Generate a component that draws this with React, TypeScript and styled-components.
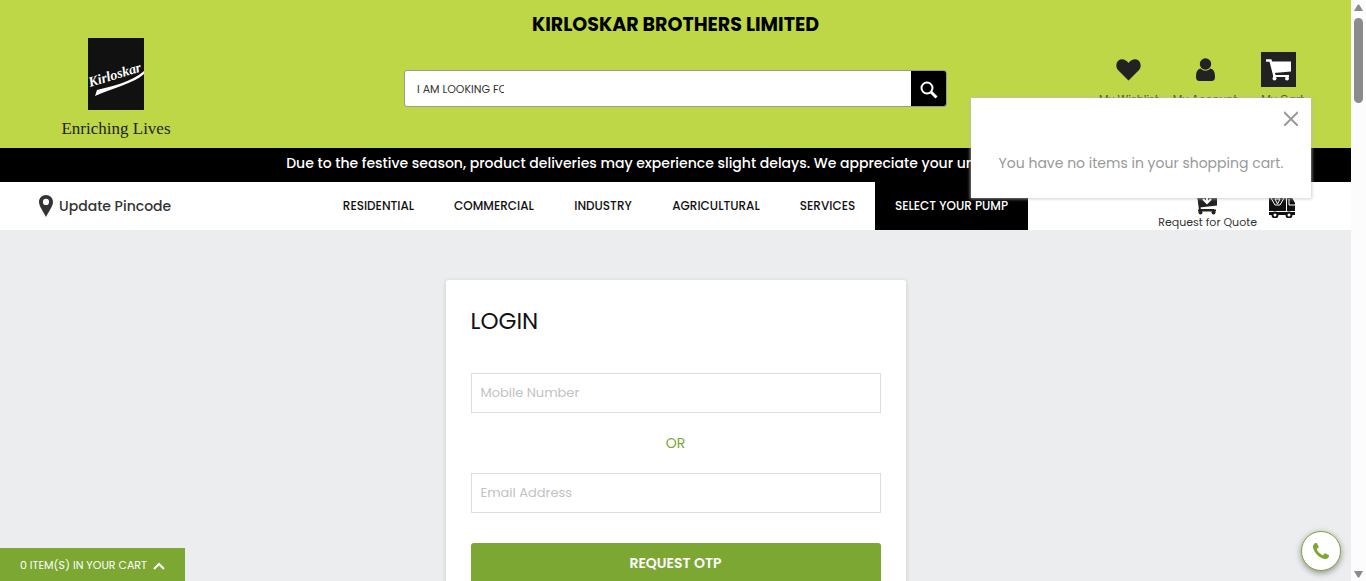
import React from "react";
import styled, { createGlobalStyle } from "styled-components";

const GlobalStyle = createGlobalStyle`
  *, *::before, *::after { box-sizing: border-box; }
  body {
    margin: 0;
    background: #ebedef;
    color: #333;
    font-family: Poppins, Inter, "Open Sans", sans-serif;
    font-size: 14px;
  }
  button, input { font: inherit; }
  a { color: inherit; text-decoration: none; }
`;

const Window = styled.div`
  display: flex;
  height: 100vh;
  overflow: hidden;
`;

const Page = styled.div`
  position: relative;
  flex: 1;
  min-width: 0;
  overflow: hidden;
`;

const ScrollBar = styled.div`
  display: flex;
  flex-direction: column;
  align-items: center;
  width: 15px;
  padding: 4px 0 3px;
  background: #fcfcfc;
`;

const ScrollThumb = styled.div`
  width: 9px;
  height: 85px;
  margin: 6px 0 auto;
  border-radius: 5px;
  background: #8b8b8b;
`;

const Header = styled.header`
  display: grid;
  grid-template-columns: 1fr minmax(0, 543px) 1fr;
  min-height: 148px;
  background: #bdd746;
`;

const Brand = styled.a`
  display: flex;
  flex-direction: column;
  align-items: center;
  width: 112px;
  margin: 38px 0 0 60px;
  color: #222;
  font-family: "Liberation Serif", serif;
  font-size: 17px;
  line-height: 20px;
  white-space: nowrap;
  gap: 9px;
`;

const HeaderCenter = styled.div`
  display: flex;
  flex-direction: column;
  gap: 20px;
`;

const CompanyName = styled.h1`
  margin: 0;
  color: #000;
  font-size: 19px;
  line-height: 50px;
  font-weight: 700;
  text-align: center;
  white-space: nowrap;
`;

const SearchForm = styled.form`
  display: flex;
  justify-content: space-between;
  height: 37px;
  border: 1px solid #999;
  border-radius: 3px;
  background: #fff;
  overflow: hidden;
`;

const SearchInput = styled.input`
  width: 99px;
  padding: 2px 0 0 12px;
  border: 0;
  outline: 0;
  background: transparent;
  font-size: 11px;
  &::placeholder { color: #333; opacity: 1; }
`;

const SearchButton = styled.button`
  display: flex;
  align-items: center;
  justify-content: center;
  width: 35px;
  padding: 2px 0 0;
  border: 0;
  background: #000;
`;

const Shortcuts = styled.nav`
  display: flex;
  justify-content: flex-end;
  align-items: flex-start;
  gap: 14px;
  padding: 52px 47px 0 0;
`;

const Shortcut = styled.a<{ $start?: boolean }>`
  display: flex;
  flex-direction: column;
  align-items: ${(p) => (p.$start ? "flex-start" : "center")};
  margin-left: ${(p) => (p.$start ? "10px" : "0")};
  gap: 3px;
  font-size: 11px;
  line-height: 18px;
  white-space: nowrap;
`;

const ShortcutIcon = styled.span<{ $boxed?: boolean }>`
  display: flex;
  align-items: center;
  justify-content: center;
  width: 35px;
  height: 35px;
  background: ${(p) => (p.$boxed ? "#222" : "transparent")};
`;

const Notice = styled.p`
  margin: 0;
  padding: 0 20px;
  background: #000;
  color: #fff;
  font-size: 14px;
  line-height: 30px;
  height: 34px;
  font-weight: 500;
  text-align: center;
  white-space: nowrap;
`;

const NavBar = styled.div`
  display: grid;
  grid-template-columns: 323px minmax(0, 705px) 1fr;
  height: 48px;
  background: #fff;
`;

const Pincode = styled.a`
  display: flex;
  align-items: center;
  gap: 6px;
  padding-left: 39px;
  font-size: 14px;
  font-weight: 500;
`;

const Categories = styled.nav`
  display: grid;
  grid-template-columns: 111fr 120fr 98fr 128fr 95fr 153fr;
`;

const Category = styled.a<{ $active?: boolean }>`
  display: flex;
  align-items: center;
  justify-content: center;
  background: ${(p) => (p.$active ? "#000" : "transparent")};
  color: ${(p) => (p.$active ? "#fff" : "#111")};
  font-size: 12px;
  font-weight: 500;
  white-space: nowrap;
`;

const QuickActions = styled.div`
  display: flex;
  justify-content: flex-end;
  align-items: flex-start;
  gap: 12px;
  padding: 11px 56px 0 0;
`;

const QuickAction = styled.a`
  display: flex;
  flex-direction: column;
  align-items: center;
  font-size: 11px;
  line-height: 14px;
  white-space: nowrap;
`;

const CartPopup = styled.section`
  position: absolute;
  top: 98px;
  right: 40px;
  display: flex;
  flex-direction: column;
  width: 340px;
  height: 100px;
  padding: 13px;
  background: #fff;
  box-shadow: 0 0 3px 1px rgba(190, 190, 190, 0.7);
`;

const CloseButton = styled.button`
  display: flex;
  align-self: flex-end;
  padding: 0;
  border: 0;
  background: transparent;
`;

const EmptyMessage = styled.p`
  margin: 26px 0 0;
  color: #999;
  font-size: 14px;
  line-height: 22px;
  text-align: center;
  white-space: nowrap;
`;

const Main = styled.main`
  display: flex;
  justify-content: center;
  padding: 50px 20px;
`;

const LoginCard = styled.form`
  display: flex;
  flex-direction: column;
  width: 100%;
  max-width: 460px;
  padding: 25px 25px 40px;
  border-radius: 3px;
  background: #fff;
  box-shadow: 0 1px 5px rgba(0, 0, 0, 0.15);
`;

const LoginTitle = styled.h2`
  margin: 0 0 36px;
  color: #111;
  font-size: 23px;
  line-height: 32px;
  font-weight: 400;
`;

const Field = styled.input`
  width: 100%;
  height: 40px;
  padding: 0 9px;
  border: 1px solid #ddd;
  background: #fff;
  font-size: 13px;
  &::placeholder { color: #c2c2c2; opacity: 1; }
`;

const Divider = styled.p`
  margin: 0;
  color: #7da733;
  font-size: 14px;
  line-height: 60px;
  text-align: center;
`;

const SubmitButton = styled.button`
  height: 40px;
  margin-top: 30px;
  border: 0;
  border-radius: 3px;
  background: #7da733;
  color: #fff;
  font-size: 14px;
  font-weight: 600;
`;

const CartTab = styled.button`
  position: fixed;
  left: 0;
  bottom: 0;
  display: flex;
  align-items: center;
  justify-content: center;
  gap: 6px;
  width: 185px;
  height: 33px;
  padding: 2px 0 0;
  border: 0;
  background: #7da733;
  color: #fff;
  font-size: 11px;
  font-weight: 400;
`;

const CallButton = styled.a`
  position: fixed;
  right: 25px;
  bottom: 10px;
  display: flex;
  align-items: center;
  justify-content: center;
  width: 40px;
  height: 40px;
  border: 1px solid #7da733;
  border-radius: 50%;
  background: #fff;
  box-shadow: 0 2px 6px rgba(0, 0, 0, 0.4);
`;

const Logo = () => (
  <svg width="56" height="72" viewBox="0 0 56 72" aria-hidden="true">
    <rect width="56" height="72" fill="#111" />
    <text
      x="2"
      y="49"
      transform="rotate(-17 2 49)"
      fill="#fff"
      fontFamily="'Liberation Serif', serif"
      fontSize="14"
      fontStyle="italic"
      fontWeight="700"
    >
      Kirloskar
    </text>
    <path d="M9 52C24 48 44 44 56 33L56 36C46 45 28 49 7 58Z" fill="#fff" />
  </svg>
);

const HeartIcon = () => (
  <svg width="25" height="22" viewBox="0 0 25 22" fill="#222" aria-hidden="true">
    <path d="M12.500 21.500L2 11C-.5 8 0 3.500 2.500 1.500C5.500-.6 9.500.2 12.500 4C15.500.2 19.500-.6 22.500 1.500C25 3.500 25.500 8 23 11Z" />
  </svg>
);

const UserIcon = () => (
  <svg width="19" height="23" viewBox="0 0 19 23" fill="#222" aria-hidden="true">
    <circle cx="9.500" cy="6" r="5.700" />
    <path d="M4.500 10.500Q9.500 15 14.500 10.500C18 11.500 19 14.500 19 19Q19 23 15.500 23H3.500Q0 23 0 19C0 14.500 1 11.500 4.500 10.500Z" />
  </svg>
);

const CartIcon = () => (
  <svg width="25" height="22" viewBox="0 0 25 22" aria-hidden="true">
    <path d="M0 1.500H4.500L8.500 17" fill="none" stroke="#fff" strokeWidth="2.500" />
    <path d="M5 2.500H25V12.500L8 14Z" fill="#fff" />
    <path d="M7 17H23" stroke="#fff" strokeWidth="2" />
    <circle cx="8.500" cy="19.500" r="2" fill="#fff" />
    <circle cx="21" cy="19.500" r="2" fill="#fff" />
  </svg>
);

const SearchIcon = () => (
  <svg width="18" height="18" viewBox="0 0 18 18" fill="none" stroke="#fff" aria-hidden="true">
    <circle cx="7" cy="7" r="5.500" strokeWidth="2" />
    <path d="M11 11L16.500 16.500" strokeWidth="3" />
  </svg>
);

const PinIcon = () => (
  <svg width="14" height="22" viewBox="0 0 14 22" aria-hidden="true">
    <path
      d="M7 0C3 0 0 3 0 7C0 11 4 16 7 22C10 16 14 11 14 7C14 3 11 0 7 0ZM7 3.800A3.100 3.100 0 1 1 7 10A3.100 3.100 0 0 1 7 3.800Z"
      fill="#333"
      fillRule="evenodd"
    />
  </svg>
);

const QuoteIcon = () => (
  <svg width="26" height="22" viewBox="0 0 26 22" aria-hidden="true">
    <path d="M1 1H3L5 17H19" fill="none" stroke="#222" strokeWidth="2" />
    <path d="M2 3H22V12.500L4.500 14.500Z" fill="#222" />
    <path d="M12 2V10M8 6L12 10L16 6" fill="none" stroke="#fff" strokeWidth="2" />
    <path d="M3 17.500H21" stroke="#222" strokeWidth="2" />
    <circle cx="5.500" cy="19.500" r="2" fill="#222" />
    <circle cx="18.500" cy="19.500" r="2" fill="#222" />
  </svg>
);

const TruckIcon = () => (
  <svg width="26" height="25" viewBox="0 0 26 25" aria-hidden="true">
    <path d="M0 1H17V18H0ZM18 3H22L26 10V18H18ZM0 19H26V22H0Z" fill="#111" />
    <path d="M2 5L6 12H11L15 5M8.500 11L6 6H11ZM20 6V12H26" fill="none" stroke="#fff" strokeWidth="1" />
    <circle cx="6" cy="22" r="2.500" fill="#fff" stroke="#111" strokeWidth="2" />
    <circle cx="20" cy="22" r="2.500" fill="#fff" stroke="#111" strokeWidth="2" />
  </svg>
);

const CloseIcon = () => (
  <svg width="14" height="15" viewBox="0 0 14 15" stroke="#999" strokeWidth="2" aria-hidden="true">
    <path d="M0 1L14 15M14 1L0 15" />
  </svg>
);

const ChevronUpIcon = () => (
  <svg width="12" height="8" viewBox="0 0 12 8" fill="none" stroke="#fff" strokeWidth="2" aria-hidden="true">
    <path d="M1 7L6 2L11 7" />
  </svg>
);

const PhoneIcon = () => (
  <svg width="16" height="16" viewBox="0 0 1408 1408" fill="#7da733" aria-hidden="true">
    <path d="M1408 1112q0 27-10 70.500t-20.500 68.500q-21 50-122 106-94 51-186 51-27 0-52.500-3.500t-57.500-12.500-47.500-14.500-55.500-20.500-49-18q-98-35-175-83-128-79-264.500-215.500t-215.500-264.500q-48-77-83-175-3-9-18-49t-20.500-55.500-14.500-47.500-12.500-57.500-3.500-52.500q0-92 51-186 56-101 106-122 25-11 68.500-21t70.500-10q14 0 21 3 18 6 53 76 11 19 30 54t35 63.500 31 53.500q3 4 17.500 25t21.500 35.500 7 28.500q0 20-28.500 50t-62 55-62 53-28.500 46q0 9 5 22.500t8.500 20.500 14 24 11.500 19q76 137 174 235t235 174q2 1 19 11.500t24 14 20.500 8.500 22.500 5q18 0 46-28.500t53-62 55-62 50-28.500q14 0 28.500 7t35.500 21.500 25 17.500q25 15 53.500 31t63.500 35 54 30q70 35 76 53 3 7 3 21z" />
  </svg>
);

const Arrow = ({ down = false }: { down?: boolean }) => (
  <svg width="9" height="8" viewBox="0 0 9 8" fill="#8b8b8b" aria-hidden="true">
    <path d={down ? "M0 1H9L5.500 7Q4.500 8 3.500 7Z" : "M0 7H9L5.500 1Q4.500 0 3.500 1Z"} />
  </svg>
);

const categories = ["RESIDENTIAL", "COMMERCIAL", "INDUSTRY", "AGRICULTURAL", "SERVICES", "SELECT YOUR PUMP"];

export default function App() {
  return (
    <Window>
      <GlobalStyle />
      <Page>
        <Header>
          <Brand href="#">
            <Logo />
            Enriching Lives
          </Brand>
          <HeaderCenter>
            <CompanyName>KIRLOSKAR BROTHERS LIMITED</CompanyName>
            <SearchForm role="search">
              <SearchInput type="text" aria-label="Search" placeholder="I AM LOOKING FOR" />
              <SearchButton type="button" aria-label="Search">
                <SearchIcon />
              </SearchButton>
            </SearchForm>
          </HeaderCenter>
          <Shortcuts>
            <Shortcut href="#">
              <ShortcutIcon><HeartIcon /></ShortcutIcon>
              My Wishlist
            </Shortcut>
            <Shortcut href="#">
              <ShortcutIcon><UserIcon /></ShortcutIcon>
              My Account
            </Shortcut>
            <Shortcut href="#" $start>
              <ShortcutIcon $boxed><CartIcon /></ShortcutIcon>
              My Cart
            </Shortcut>
          </Shortcuts>
        </Header>
        <Notice>
          Due to the festive season, product deliveries may experience slight delays. We appreciate your understanding.
        </Notice>
        <NavBar>
          <Pincode href="#">
            <PinIcon />
            Update Pincode
          </Pincode>
          <Categories>
            {categories.map((name) => (
              <Category key={name} href="#" $active={name === "SELECT YOUR PUMP"}>
                {name}
              </Category>
            ))}
          </Categories>
          <QuickActions>
            <QuickAction href="#">
              <QuoteIcon />
              Request for Quote
            </QuickAction>
            <QuickAction href="#" aria-label="Track order">
              <TruckIcon />
            </QuickAction>
          </QuickActions>
        </NavBar>
        <Main>
          <LoginCard>
            <LoginTitle>LOGIN</LoginTitle>
            <Field type="tel" aria-label="Mobile Number" placeholder="Mobile Number" />
            <Divider>OR</Divider>
            <Field type="email" aria-label="Email Address" placeholder="Email Address" />
            <SubmitButton type="button">REQUEST OTP</SubmitButton>
          </LoginCard>
        </Main>
        <CartPopup>
          <CloseButton type="button" aria-label="Close">
            <CloseIcon />
          </CloseButton>
          <EmptyMessage>You have no items in your shopping cart.</EmptyMessage>
        </CartPopup>
      </Page>
      <ScrollBar aria-hidden="true">
        <Arrow />
        <ScrollThumb />
        <Arrow down />
      </ScrollBar>
      <CartTab type="button">
        0 ITEM(S) IN YOUR CART
        <ChevronUpIcon />
      </CartTab>
      <CallButton href="#" aria-label="Call us">
        <PhoneIcon />
      </CallButton>
    </Window>
  );
}
